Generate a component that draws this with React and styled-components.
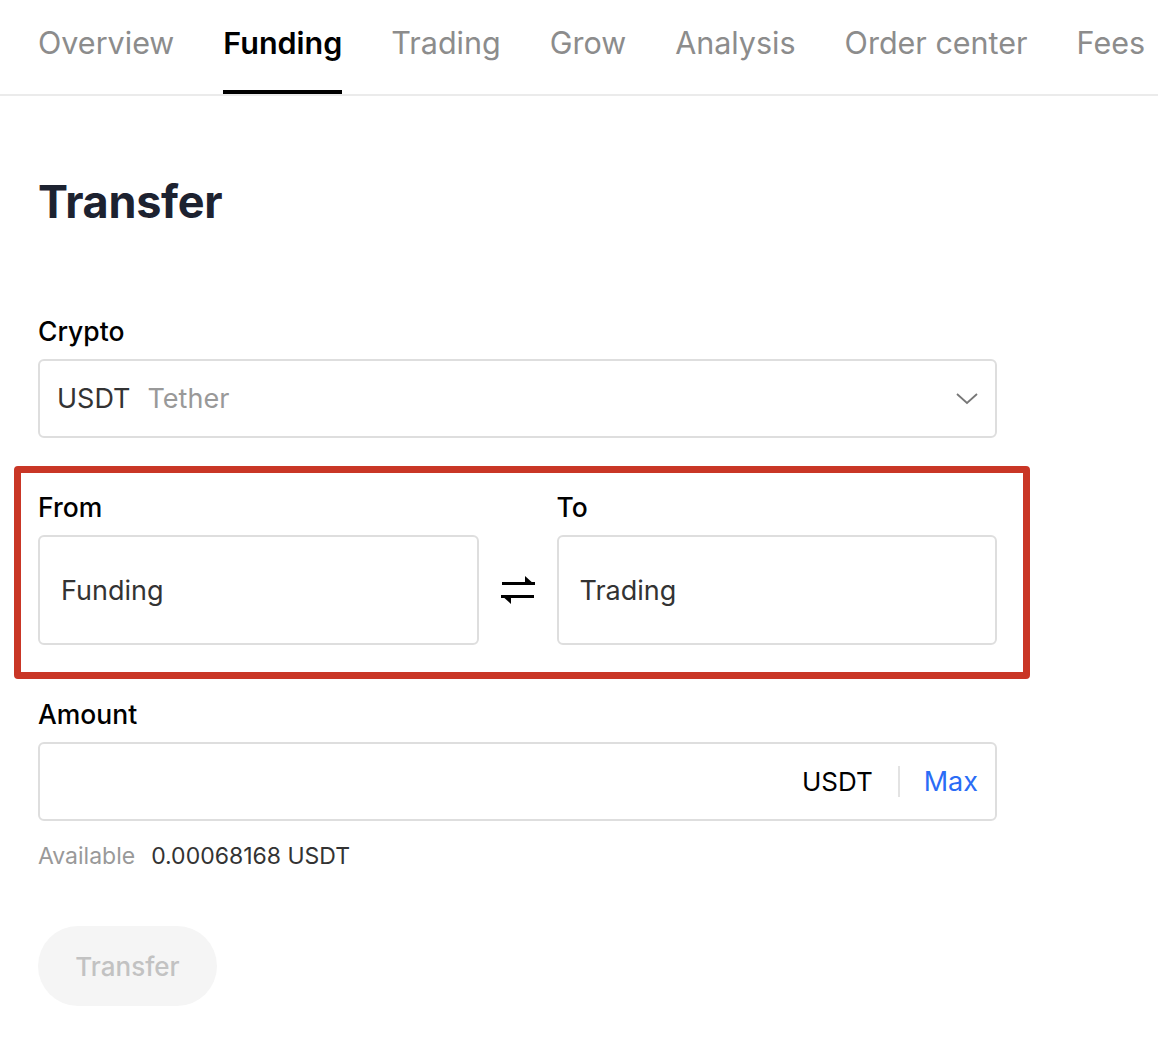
import React from "react";
import styled, { createGlobalStyle } from "styled-components";

const Global = createGlobalStyle`
  html, body { margin: 0; padding: 0; background: #fff; }
  body { font-family: Inter, "Noto Sans", "Liberation Sans", sans-serif; color: #000; }
  * { box-sizing: border-box; }
`;

const Nav = styled.nav`
  display: flex;
  gap: 49px;
  padding-left: 38px;
  border-bottom: 2px solid #ebebeb;
  height: 96px;
  overflow: hidden;
`;

const Tab = styled.div`
  position: relative;
  height: 94px;
  padding-bottom: 10px;
  display: flex;
  align-items: center;
  font-size: 30.5px;
  white-space: nowrap;
  color: ${(p) => (p.$active ? "#000" : "#8c8c8c")};
  font-weight: ${(p) => (p.$active ? 600 : 400)};
  &::after {
    content: "";
    display: ${(p) => (p.$active ? "block" : "none")};
    position: absolute;
    left: 0;
    right: 0;
    bottom: 0;
    height: 4px;
    background: #000;
  }
`;

const Page = styled.main`
  padding-left: 38px;
  width: 997px;
`;

const Title = styled.h1`
  margin: 76px 0 0;
  font-size: 45px;
  line-height: 60px;
  font-weight: 700;
  color: #1d2230;
  letter-spacing: -0.3px;
`;

const Field = styled.div`
  display: flex;
  flex-direction: column;
  gap: 12px;
  margin-top: ${(p) => p.$mt || 0}px;
`;

const Label = styled.div`
  font-size: 26.5px;
  line-height: 32px;
  font-weight: 500;
  color: #000;
`;

const Box = styled.div`
  display: flex;
  align-items: center;
  height: ${(p) => p.$h || 79}px;
  border: 2px solid #dedede;
  border-radius: 6px;
  padding: 0 17px 0 ${(p) => p.$pl || 17}px;
  font-size: 27px;
  color: #333;
`;

const Muted = styled.span`
  color: #999;
  margin-left: 17px;
`;

const Spacer = styled.div`
  flex: 1;
`;

const Highlight = styled.section`
  margin: 28px -33px 0 -24px;
  border: 7px solid #c93626;
  border-radius: 4px;
  padding: 18px 26px 27px 17px;
  display: grid;
  grid-template-columns: 1fr 34px 1fr;
  column-gap: 22px;
  align-items: end;
`;

const SwapWrap = styled.div`
  height: 110px;
  display: flex;
  align-items: center;
  justify-content: center;
`;

const UnitText = styled.span`
  color: #000;
  font-size: 26px;
`;

const Divider = styled.span`
  width: 2px;
  height: 31px;
  background: #e3e3e3;
  margin: 0 24px 0 25px;
`;

const MaxLink = styled.span`
  color: #2a6cf6;
`;

const AvailRow = styled.div`
  margin-top: 20px;
  display: flex;
  gap: 16px;
  font-size: 23px;
  line-height: 30px;
`;

const AvailLabel = styled.span`
  color: #999;
`;

const AvailValue = styled.span`
  color: #333;
`;

const Button = styled.button`
  margin-top: 55px;
  width: 179px;
  height: 80px;
  border-radius: 40px;
  border: none;
  background: #f5f5f5;
  color: #c2c2c2;
  font-family: inherit;
  font-size: 26px;
  font-weight: 500;
`;

const tabs = ["Overview", "Funding", "Trading", "Grow", "Analysis", "Order center", "Fees"];

function SwapIcon() {
  return (
    <svg width="34" height="28" viewBox="0 0 34 28">
      <rect x="1" y="6" width="33" height="3" fill="#000" />
      <polygon points="24,0 34,9 24,9" fill="#000" />
      <rect x="0" y="19" width="33" height="3" fill="#000" />
      <polygon points="0,19 10,19 10,28" fill="#000" />
    </svg>
  );
}

function Chevron() {
  return (
    <svg width="22" height="12" viewBox="0 0 22 12">
      <polyline points="1,1 11,10 21,1" fill="none" stroke="#777" strokeWidth="1.8" />
    </svg>
  );
}

export default function App() {
  return (
    <>
      <Global />
      <Nav>
        {tabs.map((t) => (
          <Tab key={t} $active={t === "Funding"}>
            {t}
          </Tab>
        ))}
      </Nav>
      <Page>
        <Title>Transfer</Title>
        <Field $mt={83}>
          <Label>Crypto</Label>
          <Box>
            USDT<Muted>Tether</Muted>
            <Spacer />
            <Chevron />
          </Box>
        </Field>
        <Highlight>
          <Field>
            <Label>From</Label>
            <Box $h={110} $pl={21}>Funding</Box>
          </Field>
          <SwapWrap>
            <SwapIcon />
          </SwapWrap>
          <Field>
            <Label>To</Label>
            <Box $h={110} $pl={21}>Trading</Box>
          </Field>
        </Highlight>
        <Field $mt={19}>
          <Label>Amount</Label>
          <Box>
            <Spacer />
            <UnitText>USDT</UnitText>
            <Divider />
            <MaxLink>Max</MaxLink>
          </Box>
        </Field>
        <AvailRow>
          <AvailLabel>Available</AvailLabel>
          <AvailValue>0.00068168 USDT</AvailValue>
        </AvailRow>
        <Button>Transfer</Button>
      </Page>
    </>
  );
}
